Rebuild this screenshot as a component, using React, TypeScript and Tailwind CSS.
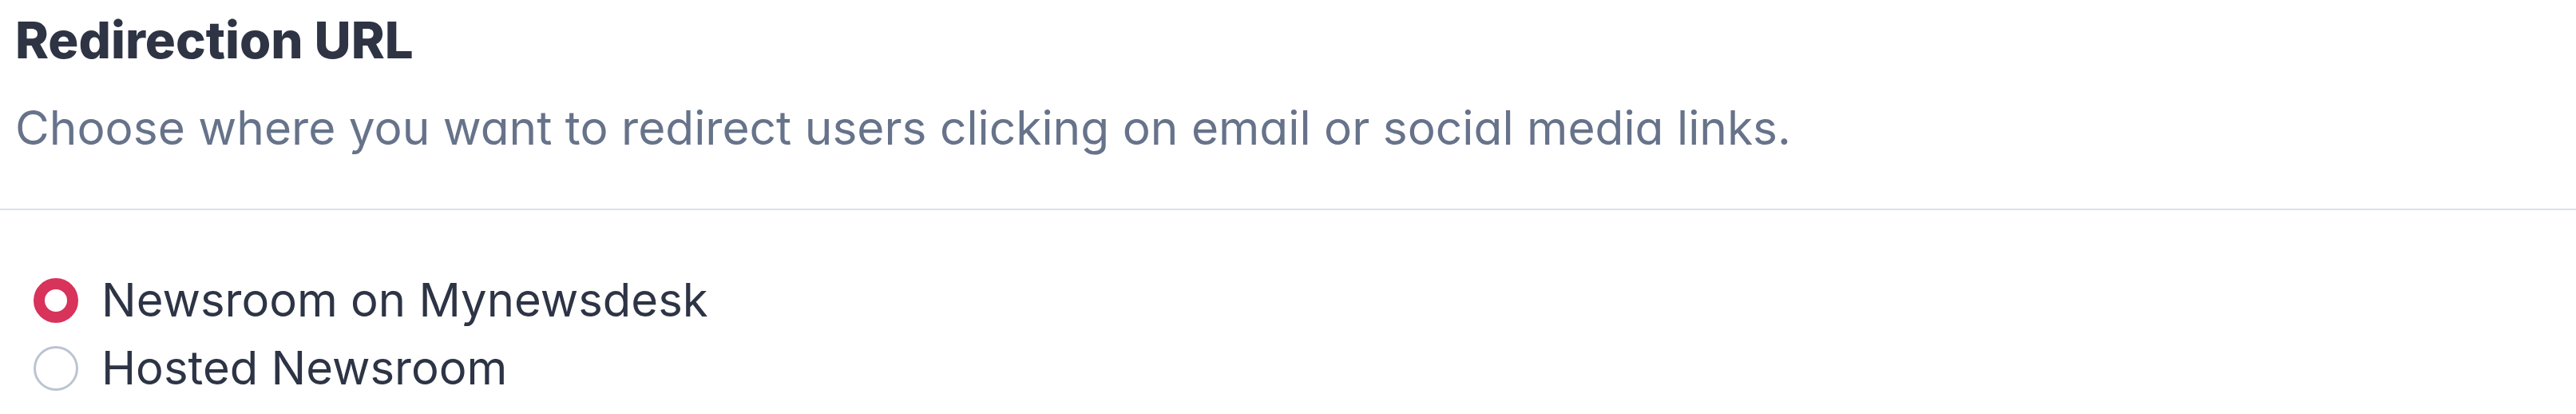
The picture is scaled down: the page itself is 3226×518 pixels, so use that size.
import React from "react";

export default function App() {
  return (
    <div className="w-full h-[518px] bg-white overflow-hidden font-['Inter',sans-serif] [font-feature-settings:'cv11']">
      <div className="pl-[19px] pt-[14px]">
        <h2 className="text-[63.5px] leading-[72px] font-extrabold text-[#2e3444]">Redirection URL</h2>
        <p className="mt-[38px] text-[58.6px] leading-[72px] text-[#66738a]">
          Choose where you want to redirect users clicking on email or social media links.
        </p>
      </div>
      <div className="mt-[65px] h-[2px] bg-[#dde1ea]" />
      <div className="pl-[42px] pt-[70px] flex flex-col">
        <label className="flex items-center h-[85px] gap-[29px] text-[58px] text-[#2d3445]">
          <span className="w-[56px] h-[56px] rounded-full border-[14px] border-[#d8335a] bg-white shrink-0" />
          <span>Newsroom on Mynewsdesk</span>
        </label>
        <label className="flex items-center h-[85px] gap-[29px] text-[58px] text-[#2d3445]">
          <span className="w-[56px] h-[56px] rounded-full border-[3px] border-[#bcc4d2] bg-white shrink-0" />
          <span>Hosted Newsroom</span>
        </label>
      </div>
    </div>
  );
}
